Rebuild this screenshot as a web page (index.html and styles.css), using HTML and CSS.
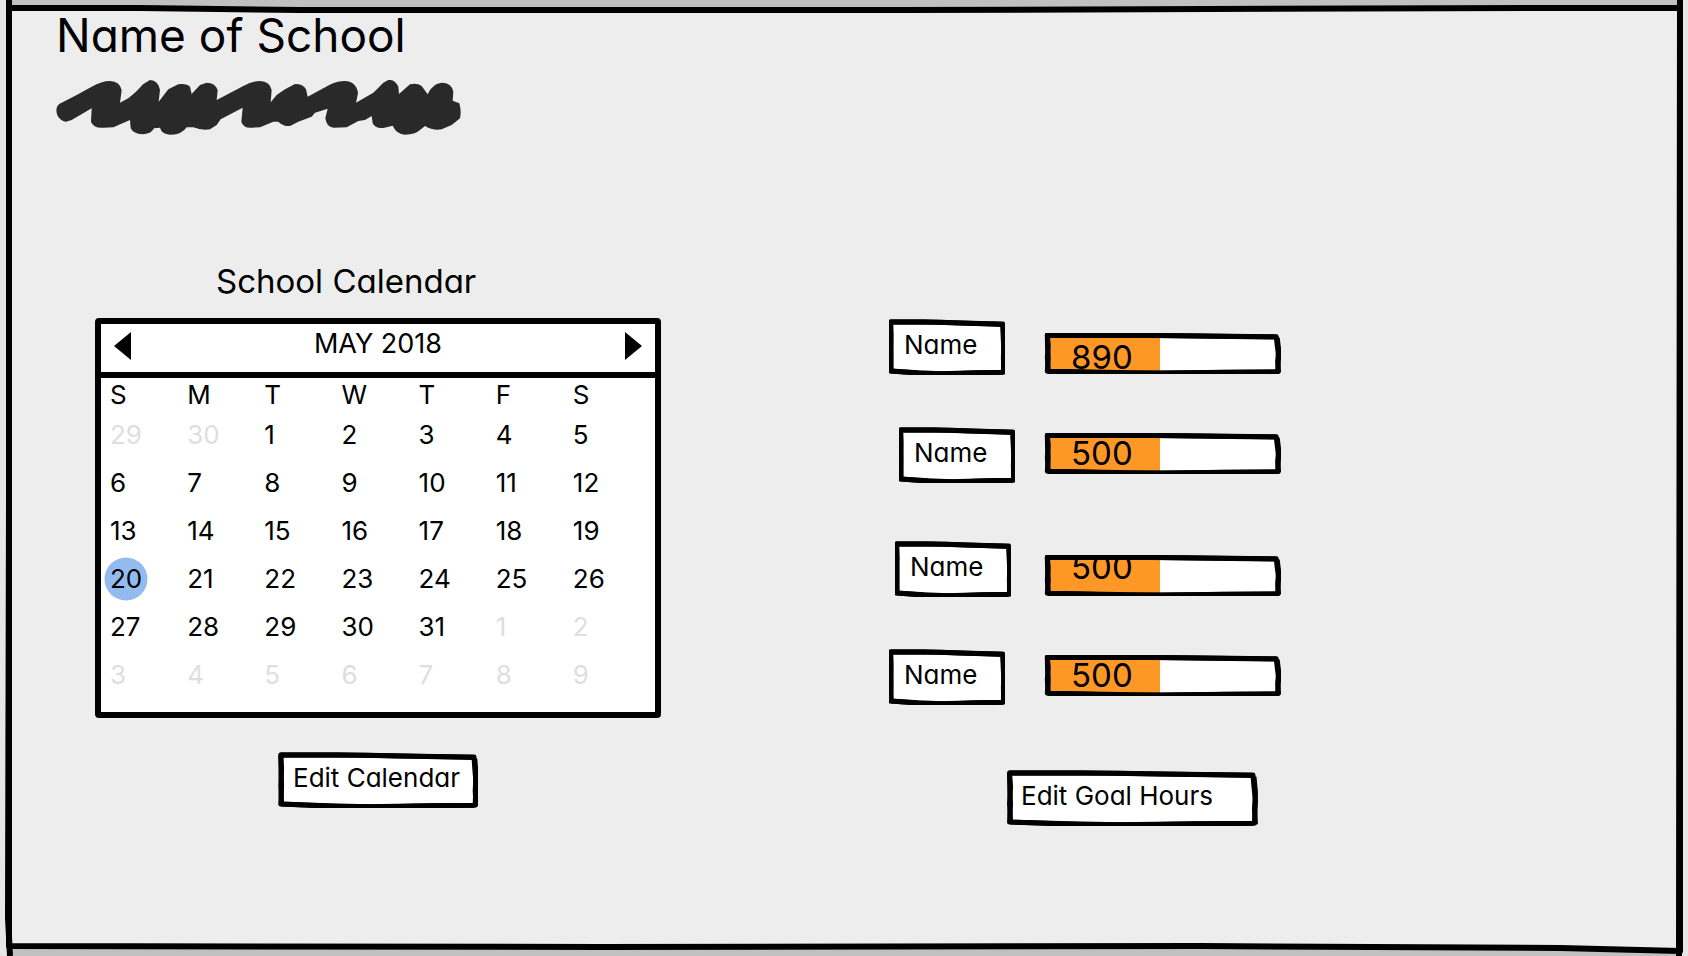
FILE: index.html
```html
<!DOCTYPE html>
<html lang="en">
<head>
<meta charset="utf-8">
<meta name="viewport" content="width=device-width, initial-scale=1">
<title>School Calendar</title>
<link rel="stylesheet" href="styles.css">
</head>
<body>
<svg class="defs" aria-hidden="true">
  <symbol id="box" viewBox="0 0 100 100" preserveAspectRatio="none">
    <path class="ink" d="M1.4 5 L30 5 L60 7 L98 9 L98.400 30 L99 55 L98.600 95 L75 96 L50 98 L25 96 L1.400 93 L1.800 60 L1.500 35 Z"/>
    <path class="ink" d="M1.400 6 L45 6 L98 10 M98.400 12 L99 40 L98.600 70 L99 97 M98 95 L60 97 L35 98 L1.600 93 M1.800 90 L1.400 60 L1.800 30 L1.400 6"/>
  </symbol>
</svg>
<div class="page">
  <svg class="frame" viewBox="0 0 1688 956" preserveAspectRatio="none" aria-hidden="true">
    <path class="outside" d="M0 0H1688V956H0Z"/>
    <path class="shade" d="M9 0H1680V956H9Z"/>
    <path class="sheet" d="M9 8 L140 8 L300 10 L900 10 L1540 8 L1680 8 L1680 951 L1560 948 L1200 946 L600 947 L9 946 Z"/>
    <path class="edge" d="M9 0 L9 500 L8 918 L10 956 M1680 0 L1679 956"/>
  </svg>
  <header class="head">
    <h1 class="title">Name of School</h1>
    <svg class="scribble" viewBox="18 30 1224 168" role="img" aria-label="Subtitle">
      <path d="M35 98 C10 105 15 150 48 155 L65 150 L125 115 L123 155 Q130 175 160 173 L190 172 L240 150 L242 175 Q252 195 285 192 Q305 190 312 175 L330 173 Q335 192 360 194 Q395 195 410 172 L430 172 Q455 182 480 178 L500 165 L512 148 L578 113 L574 155 Q580 175 605 173 L630 172 L670 155 L685 155 Q700 170 720 168 L745 155 L785 140 L795 128 L833 116 L826 145 Q830 172 850 173 L890 172 L925 153 L945 150 L965 138 L968 160 Q975 176 1000 174 L1028 167 Q1040 193 1065 194 Q1095 194 1110 180 L1125 168 Q1150 183 1175 178 L1205 165 L1230 145 Q1235 125 1228 100 L1208 92 L1210 65 Q1205 38 1175 38 L1160 42 Q1140 55 1133 73 L1115 48 Q1100 38 1080 43 L1047 72 L1045 50 Q1035 28 1015 30 L1000 38 L970 68 L918 98 L924 70 Q920 35 885 33 Q860 33 838 45 L773 80 L768 58 Q760 42 735 42 L705 58 L680 75 L662 97 L665 60 Q660 35 630 33 Q605 33 580 48 L500 90 L503 60 Q495 38 470 38 L450 45 L425 72 L420 50 Q410 40 385 43 L355 58 L326 95 L330 60 Q325 32 300 30 L280 42 L258 65 L235 85 L210 98 L215 60 Q210 35 180 33 Q155 33 125 50 L80 75 Z"/>
    </svg>
  </header>
  <main class="content">
    <section class="schedule">
      <h2 class="subtitle">School Calendar</h2>
      <div class="calendar">
        <div class="month">
          <button class="arrow" type="button" aria-label="Previous month"><svg viewBox="0 0 17 28"><path d="M17 0V28L0 14Z"/></svg></button>
          <span class="month-name">MAY 2018</span>
          <button class="arrow" type="button" aria-label="Next month"><svg viewBox="0 0 17 28"><path d="M0 0V28L17 14Z"/></svg></button>
        </div>
        <div class="grid">
        <table class="days">
          <thead><tr><th>S</th><th>M</th><th>T</th><th>W</th><th>T</th><th>F</th><th>S</th></tr></thead>
          <tbody>
            <tr><td class="other">29</td><td class="other">30</td><td>1</td><td>2</td><td>3</td><td>4</td><td>5</td></tr>
            <tr><td>6</td><td>7</td><td>8</td><td>9</td><td>10</td><td>11</td><td>12</td></tr>
            <tr><td>13</td><td>14</td><td>15</td><td>16</td><td>17</td><td>18</td><td>19</td></tr>
            <tr><td><span class="today">20</span></td><td>21</td><td>22</td><td>23</td><td>24</td><td>25</td><td>26</td></tr>
            <tr><td>27</td><td>28</td><td>29</td><td>30</td><td>31</td><td class="other">1</td><td class="other">2</td></tr>
            <tr><td class="other">3</td><td class="other">4</td><td class="other">5</td><td class="other">6</td><td class="other">7</td><td class="other">8</td><td class="other">9</td></tr>
          </tbody>
        </table>
        </div>
      </div>
      <button class="sketch edit-calendar" type="button"><svg class="outline" aria-hidden="true"><use href="#box"/></svg><span class="text">Edit Calendar</span></button>
    </section>
    <section class="goals">
      <div class="goal goal-low">
        <div class="sketch name"><svg class="outline" aria-hidden="true"><use href="#box"/></svg><span class="text">Name</span></div>
        <div class="bar"><div class="track"><div class="fill" style="width:49%"></div><span class="value value-low">890</span></div><svg class="outline hollow" aria-hidden="true"><use href="#box"/></svg></div>
      </div>
      <div class="goal">
        <div class="sketch name name-far"><svg class="outline" aria-hidden="true"><use href="#box"/></svg><span class="text">Name</span></div>
        <div class="bar"><div class="track"><div class="fill" style="width:49%"></div><span class="value">500</span></div><svg class="outline hollow" aria-hidden="true"><use href="#box"/></svg></div>
      </div>
      <div class="goal goal-low goal-spaced">
        <div class="sketch name name-near"><svg class="outline" aria-hidden="true"><use href="#box"/></svg><span class="text">Name</span></div>
        <div class="bar"><div class="track"><div class="fill" style="width:49%"></div><span class="value value-high">500</span></div><svg class="outline hollow" aria-hidden="true"><use href="#box"/></svg></div>
      </div>
      <div class="goal">
        <div class="sketch name"><svg class="outline" aria-hidden="true"><use href="#box"/></svg><span class="text">Name</span></div>
        <div class="bar"><div class="track"><div class="fill" style="width:49%"></div><span class="value">500</span></div><svg class="outline hollow" aria-hidden="true"><use href="#box"/></svg></div>
      </div>
      <button class="sketch edit-goals" type="button"><svg class="outline" aria-hidden="true"><use href="#box"/></svg><span class="text">Edit Goal Hours</span></button>
    </section>
  </main>
</div>
</body>
</html>
```
FILE: styles.css
```css
* { box-sizing: border-box; }
body {
  margin: 0;
  background: #ededed;
  color: #000;
  font-family: Inter, Lato, sans-serif;
  font-size: 26px;
  line-height: 32px;
  font-feature-settings: "cv11";
}
button { font: inherit; font-feature-settings: inherit; color: inherit; background: none; border: 0; padding: 0; cursor: pointer; }
.defs { position: absolute; width: 0; height: 0; }
.page { position: relative; min-height: 100vh; overflow: hidden; }
.frame { position: absolute; inset: 0; width: 100%; height: 100%; }
.frame path { vector-effect: non-scaling-stroke; }
.outside { fill: #e6e6e6; }
.shade { fill: #c0c0c0; }
.sheet { fill: #ededed; stroke: #000; stroke-width: 6; stroke-linejoin: round; }
.edge { fill: none; stroke: #000; stroke-width: 6; }
.head { position: relative; padding: 7px 56px 0; }
.title { margin: 0; font-size: 46px; line-height: 56px; font-weight: 400; }
.scribble { display: block; width: 408px; height: 56px; margin-top: 17px; }
.scribble path { fill: #292929; }
.content {
  position: relative;
  display: grid;
  grid-template-columns: 566fr 228fr 392fr 407fr;
  padding: 124px 0 48px 95px;
}
.schedule { display: flex; flex-direction: column; }
.subtitle { margin: 0 0 16px 121px; font-size: 33px; line-height: 42px; font-weight: 400; }
.calendar { border: 6px solid #000; border-radius: 4px; background: #fff; }
.month { display: flex; justify-content: space-between; align-items: center; height: 54px; padding: 0 13px 4px; border-bottom: 6px solid #000; }
.month-name { padding-bottom: 4px; font-size: 27px; }
.arrow { display: flex; }
.arrow svg { width: 17px; height: 28px; }
.grid { padding: 1px 14px 13px 0; }
.days { width: 100%; border-collapse: collapse; table-layout: fixed; }
.days th, .days td { padding: 0 0 0 9px; height: 48px; font-weight: 400; text-align: left; vertical-align: middle; }
.days th { height: 32px; }
.days .other { color: #dedede; }
.today { position: relative; z-index: 0; }
.today::before { content: ""; position: absolute; z-index: -1; top: 50%; left: 50%; width: 43px; height: 43px; border-radius: 50%; background: #94bbef; transform: translate(-50%, -50%); }
.sketch { position: relative; height: 56px; padding: 10px 15px 0; text-align: left; line-height: 32px; white-space: nowrap; }
button.sketch { display: flex; }
.outline { position: absolute; inset: 0; width: 100%; height: 100%; overflow: visible; }
.ink { fill: var(--paper, #fff); stroke: #000; stroke-width: 5; vector-effect: non-scaling-stroke; stroke-linejoin: round; }
.ink + .ink { fill: none; }
.hollow { --paper: none; }
.text { position: relative; }
.edit-calendar { width: 200px; margin: 34px 0 0 183px; }
.goals { grid-column: 3; padding-top: 59px; }
.goal { display: grid; grid-template-columns: 155fr 237fr; align-items: start; padding-bottom: 52px; }
.goal-spaced { padding-top: 6px; }
.name { width: 116px; }
.name-far { margin-left: 10px; }
.name-near { margin-left: 6px; }
.bar { position: relative; height: 41px; margin-top: 6px; }
.goal-low .bar { margin-top: 14px; }
.track { position: absolute; inset: 3px; background: #fff; }
.fill { position: absolute; inset: 0 auto 0 0; background: #fd9827; }
.value { position: absolute; top: 1px; left: 24px; font-size: 33px; line-height: 32px; }
.value-low { top: 5px; }
.value-high { top: -7px; }
.edit-goals { width: 252px; margin: 13px 0 0 117px; }
```
